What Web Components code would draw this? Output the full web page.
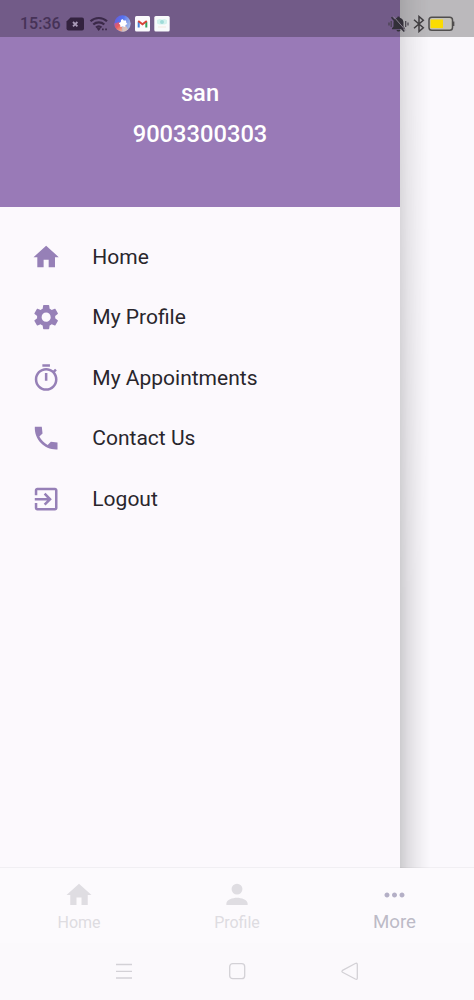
<!DOCTYPE html>
<html lang="en">
<head>
<meta charset="utf-8">
<title>Navigation drawer</title>
<style>
html,body{margin:0;height:100%;overflow:hidden}
body{font-family:Roboto,"Liberation Sans",sans-serif;background:#fbf9fd}
</style>
</head>
<body>
<phone-screen>
  <status-bar slot="status">15:36</status-bar>
  <nav-drawer slot="drawer">
    <user-header slot="header"><span>san</span><span slot="phone">9003300303</span></user-header>
    <menu-item icon="home">Home</menu-item>
    <menu-item icon="gear">My Profile</menu-item>
    <menu-item icon="timer">My Appointments</menu-item>
    <menu-item icon="phone">Contact Us</menu-item>
    <menu-item icon="exit">Logout</menu-item>
  </nav-drawer>
  <tab-bar slot="tabs">
    <tab-item icon="home">Home</tab-item>
    <tab-item icon="person">Profile</tab-item>
    <tab-item icon="dots" active>More</tab-item>
  </tab-bar>
  <system-nav slot="nav"></system-nav>
</phone-screen>
<script>
const ICONS = {
  home: 'M10 20v-6h4v6h5v-8h3L12 3 2 12h3v8z',
  gear: 'M19.14 12.94c.04-.3.06-.61.06-.94 0-.32-.02-.64-.07-.94l2.03-1.58c.18-.14.23-.41.12-.61l-1.92-3.32c-.12-.22-.37-.29-.59-.22l-2.39.96c-.5-.38-1.03-.7-1.62-.94l-.36-2.54c-.04-.24-.24-.41-.48-.41h-3.84c-.24 0-.43.17-.47.41l-.36 2.54c-.59.24-1.13.57-1.62.94l-2.39-.96c-.22-.08-.47 0-.59.22L2.74 8.87c-.12.21-.08.47.12.61l2.03 1.58c-.05.3-.09.63-.09.94s.02.64.07.94l-2.03 1.58c-.18.14-.23.41-.12.61l1.92 3.32c.12.22.37.29.59.22l2.39-.96c.5.38 1.03.7 1.62.94l.36 2.54c.05.24.24.41.48.41h3.84c.24 0 .44-.17.47-.41l.36-2.54c.59-.24 1.13-.56 1.62-.94l2.39.96c.22.08.47 0 .59-.22l1.92-3.32c.12-.22.07-.47-.12-.61l-2.01-1.58zM12 15.6c-1.98 0-3.6-1.62-3.6-3.6s1.62-3.6 3.6-3.6 3.6 1.62 3.6 3.6-1.62 3.6-3.6 3.6z',
  timer: 'M15 1H9v2h6V1zm-4 13h2V8h-2v6zm8.03-6.61l1.42-1.42c-.43-.51-.9-.99-1.41-1.41l-1.42 1.42C16.07 4.74 14.12 4 12 4c-4.97 0-9 4.03-9 9s4.02 9 9 9 9-4.03 9-9c0-2.12-.74-4.07-1.97-5.61zM12 20c-3.87 0-7-3.13-7-7s3.13-7 7-7 7 3.13 7 7-3.13 7-7 7z',
  phone: 'M21 15.46l-5.27-.61-2.52 2.52c-2.83-1.44-5.15-3.75-6.59-6.59l2.53-2.53L8.54 3H3.03C2.45 13.18 10.82 21.55 21 20.97v-5.51z',
  exit: 'M10.09 15.59L11.5 17l5-5-5-5-1.41 1.41L12.67 11H3v2h9.67l-2.58 2.59zM19 3H5c-1.11 0-2 .9-2 2v4h2V5h14v14H5v-4H3v4c0 1.1.89 2 2 2h14c1.1 0 2-.9 2-2V5c0-1.1-.9-2-2-2z',
  person: 'M12 11.6a4.35 4.35 0 1 0 0-8.7 4.35 4.35 0 0 0 0 8.700zM3.500 20v-1.200c0-2.900 5-4.600 8.500-4.600s8.500 1.700 8.500 4.600V20z',
  dots: 'M6 10c-1.100 0-2 .9-2 2s.9 2 2 2 2-.9 2-2-.9-2-2-2zm12 0c-1.100 0-2 .9-2 2s.9 2 2 2 2-.9 2-2-.9-2-2-2zm-6 0c-1.100 0-2 .9-2 2s.9 2 2 2 2-.9 2-2-.9-2-2-2z'
};
const define = (name, render) => customElements.define(name, class extends HTMLElement {
  constructor() { super(); this.attachShadow({mode: 'open'}); }
  connectedCallback() { this.shadowRoot.innerHTML = render(this); }
});
const glyph = el => `<svg viewBox="0 0 24 24"><path fill="currentColor" d="${ICONS[el.getAttribute('icon')]}"/></svg>`;

define('phone-screen', () => `<style>
:host{display:grid;grid-template-rows:867px 76px 57px;width:474px;height:1000px;position:relative;overflow:hidden;background:#fbf9fd}
.body{display:flex;min-height:0}
.shade{width:30px;height:868px;position:relative;z-index:1;background:
 linear-gradient(90deg,rgba(0,0,0,.18),rgba(0,0,0,.115) 25%,rgba(0,0,0,.06) 55%,rgba(0,0,0,.02) 85%,transparent);
 -webkit-mask-image:linear-gradient(rgba(0,0,0,.6),rgba(0,0,0,.8) 35%,#000 70%);mask-image:linear-gradient(rgba(0,0,0,.6),rgba(0,0,0,.8) 35%,#000 70%)}
.status{position:absolute;inset:0 0 auto 0;z-index:2}
</style>
<div class="body"><slot name="drawer"></slot><div class="shade"></div></div>
<slot name="tabs"></slot><slot name="nav"></slot>
<div class="status"><slot name="status"></slot></div>`);

define('status-bar', () => `<style>
:host{display:flex;align-items:center;justify-content:space-between;box-sizing:border-box;height:37px;padding:10px 19.500px 0 20px;background:rgba(0,0,0,.255);color:#463257}
.side{display:flex;align-items:center}
.time{font-size:16px;font-weight:500;line-height:20px;width:46px}
svg{display:block;flex:none}
</style>
<div class="side"><div class="time"><slot></slot></div>
<svg width="18" height="14" viewBox="0 0 18 14"><path fill="#33223f" d="M4.500.5H16a2 2 0 0 1 2 2v9a2 2 0 0 1-2 2H2.500a2 2 0 0 1-2-2v-7z"/><path stroke="#a99ab8" stroke-width="1.800" d="m7 5 4.400 4.400m0-4.400L7 9.400"/></svg>
<svg style="margin-left:5px" width="20" height="16" viewBox="0 0 20 16" fill="none" stroke="#3b2949" stroke-width="2.200"><path d="M1.500 5.300a12 12 0 0 1 16.500 0M4.300 8.500a8 8 0 0 1 11 0M7 11.500a4.200 4.200 0 0 1 5.500 0"/><path fill="#3b2949" stroke="none" d="m7.700 12.500 2-1 2 1-2 2.500zM13 12.500h1.700v1.700H13zm3.200 0h1.700v1.700h-1.700z"/></svg>
<svg style="margin-left:5px" width="17" height="17" viewBox="0 0 17 17"><defs><linearGradient id="g" x2="1" y2=".45"><stop stop-color="#6a58d8"/><stop offset=".5" stop-color="#5573ef"/><stop offset="1" stop-color="#a6bae6"/></linearGradient><linearGradient id="r" x2=".7" y2="1"><stop stop-color="#a75bb0"/><stop offset=".5" stop-color="#e85b5d"/><stop offset="1" stop-color="#e9a890"/></linearGradient></defs><circle cx="8.500" cy="8.500" r="8.200" fill="url(#g)"/><path fill="url(#r)" d="M.3 8.500 5 7l3 5 .5 4.700A8.200 8.200 0 0 1 .3 8.500"/><path fill="#d9c2bc" d="m8 12 4-1 2 3.500a8 8 0 0 1-5.500 2.200z"/><path fill="#fff" d="m8.500 4 1.200 1.600 2.300-.1.300 2.300 1.200 1.100-1.900 1.200-.5 2-2.400-.7-2.300.7-.2-2.200-1.400-1.700 2-1.200.2-2z"/></svg>
<svg style="margin-left:4px" width="15" height="16" viewBox="0 0 15 16"><rect width="15" height="15.500" rx="1.500" fill="#fbfafd"/><path fill="none" stroke="#4780d8" stroke-width="2" d="M3.700 11.500V6"/><path fill="none" stroke="#38a260" stroke-width="2" d="M11.300 11.500V6"/><path fill="none" stroke="#d84338" stroke-width="2" d="m3.200 5 4.300 3.300L11.800 5"/></svg>
<svg style="margin-left:4px" width="16" height="16" viewBox="0 0 16 16"><rect x=".3" width="15.400" height="15.500" rx="1.500" fill="#f8fafb"/><path fill="#d3f1ed" d="m3 4 2.500-1 2.500.5L10.500 3 13 4v3.500l-2.500 1H5.500L3 7.500z"/><circle cx="8" cy="6" r="2" fill="#a0dbd8"/><path fill="#f3e9df" d="M4 10.500h8v1H4z"/></svg></div>
<div class="side">
<svg width="21" height="18" viewBox="0 0 21 18"><path fill="#333039" d="M10.500 1.500c.8 0 1.200.5 1.300 1.200 2.500.6 3.700 2.500 3.700 4.800v4l1.500 1.700v1H4v-1l1.500-1.700v-4c0-2.300 1.200-4.200 3.700-4.800.1-.7.500-1.200 1.300-1.200M8.500 15h4c-.5 2-3.500 2-4 0"/><path d="M5.500 1.500 17.800 15.500" stroke="#8b8292" stroke-width="1"/><path d="M3.500 2.300 16.300 16.600" stroke="#333039" stroke-width="1.500"/><path d="M1 7.500v3M3.200 6v6M17.700 6v6M20 7.500v3" stroke="#45404b" stroke-width="1.200"/></svg>
<svg style="margin-left:4px" width="12" height="18" viewBox="0 0 12 18"><path fill="none" stroke="#403e41" stroke-width="1.500" d="m1 4.700 9.300 8.100L6 16.500v-15l4.300 3.700L1 13.300"/></svg>
<svg style="margin-left:3px" width="27" height="16" viewBox="0 0 27 16"><rect x="1" y="1.300" width="23.500" height="13" rx="2.800" fill="#c5c3bb" stroke="#504e4e" stroke-width="1.500"/><path fill="#fbdc00" d="M2.500 3.500h12.500v8.600H2.500z"/><path d="M25.500 5.500v4.500" stroke="#504e4e" stroke-width="1.700"/></svg></div>`);

define('nav-drawer', () => `<style>
:host{display:flex;flex-direction:column;flex:none;width:400px;height:867px;background:#fcf9fd}
.items{padding-top:20px}
</style>
<slot name="header"></slot><div class="items"><slot></slot></div>`);

define('user-header', () => `<style>
:host{display:flex;flex-direction:column;align-items:center;box-sizing:border-box;height:206.500px;width:400px;padding-top:73px;background:#997ab7;color:#fff;font-size:23.700px;font-weight:500;line-height:40.500px}
</style><slot></slot><slot name="phone"></slot>`);

define('menu-item', el => `<style>
:host{display:flex;align-items:center;gap:31px;height:60.500px;padding-left:31px;font-size:21px;line-height:28px;color:#29262c}
svg{width:30.300px;height:30.300px;color:#9680b7;flex:none}
</style>${glyph(el)}<slot></slot>`);

define('tab-bar', () => `<style>
:host{display:grid;grid-template-columns:repeat(3,1fr);height:76px;box-sizing:border-box;border-top:1.500px solid #f1eff3;background:#fcfafd}
</style><slot></slot>`);

define('tab-item', el => `<style>
:host{display:flex;flex-direction:column;align-items:center;padding-top:12px;font-size:16px;line-height:20px;color:#dedce1}
:host([active]){color:#bdbac7;font-size:18.700px;line-height:23px;padding-right:1px}
svg{width:30px;height:30px;color:#dfdde2}
:host([active]) svg{color:#b4afc6;width:31px;margin-bottom:-2px}
.label{padding-top:3px}
</style>${glyph(el)}<div class="label"><slot></slot></div>`);

define('system-nav', () => `<style>
:host{display:flex;justify-content:center;align-items:center;gap:94px;background:#fbf9fc;box-sizing:border-box;height:57px}
svg{display:block;width:19px;height:19px;fill:none;stroke:#d3d1d6;stroke-width:1.300}
</style>
<svg viewBox="0 0 19 19"><path d="M1 2.500h16M1 9.300h16M1 16h16"/></svg>
<svg viewBox="0 0 19 19"><rect x="1.700" y="1.700" width="15" height="15" rx="3"/></svg>
<svg viewBox="0 0 19 19"><path stroke-linejoin="round" d="M14.300 1.500q2-.8 2 1v13.500q0 2-2 1L1.500 10.200q-1.200-.9 0-1.800z"/></svg>`);
</script>
</body>
</html>
